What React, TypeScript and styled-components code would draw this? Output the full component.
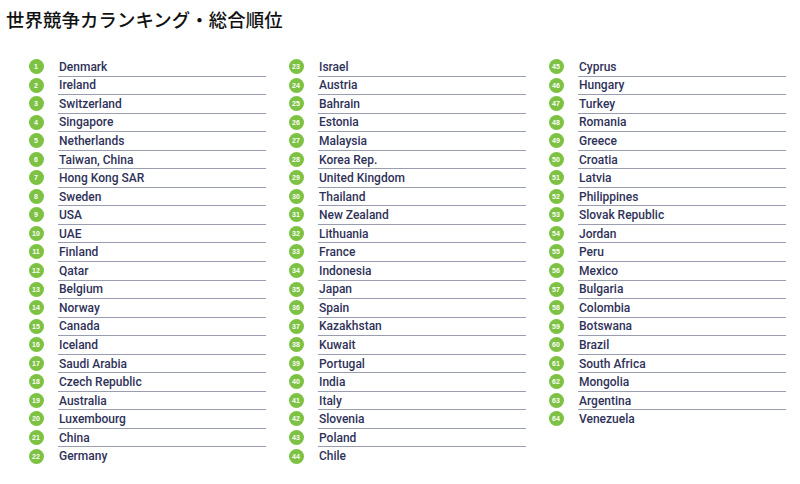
import React from 'react'
import styled, { createGlobalStyle } from 'styled-components'

const GlobalStyle = createGlobalStyle`
  html, body {
    margin: 0;
    padding: 0;
    background: #ffffff;
  }
`

const Page = styled.div`
  width: 800px;
  height: 484px;
  background: #ffffff;
  overflow: hidden;
  font-family: Roboto, 'Liberation Sans', sans-serif;
`

const Title = styled.h1`
  margin: 0;
  padding: 8px 0 0 6px;
  height: 48px;
  box-sizing: border-box;
  font-family: 'Noto Sans CJK JP', sans-serif;
  font-size: 18.4px;
  font-weight: 500;
  line-height: 22px;
  color: #111111;
  letter-spacing: 0.1px;
`

const Columns = styled.div`
  display: grid;
  grid-template-columns: repeat(3, 260px);
  padding: 10px 0 0 29px;
`

const Column = styled.ol`
  list-style: none;
  margin: 0;
  padding: 0;
  display: flex;
  flex-direction: column;
`

const Row = styled.li`
  display: flex;
  align-items: stretch;
  height: 18.55px;
`

const BadgeCell = styled.div`
  width: 29px;
  display: flex;
  align-items: center;
  padding-bottom: 1.5px;
  box-sizing: border-box;
`

const Badge = styled.span`
  width: 15px;
  height: 15px;
  margin-left: -0.5px;
  border-radius: 50%;
  background: #7dc243;
  color: #ffffff;
  font-family: 'Liberation Sans', Arial, sans-serif;
  font-size: 7px;
  font-weight: 700;
  display: flex;
  align-items: center;
  justify-content: center;
`

const Name = styled.div<{ $last: boolean }>`
  width: 208px;
  box-sizing: border-box;
  display: flex;
  align-items: center;
  padding-left: 1px;
  font-size: 12px;
  font-weight: 500;
  color: #2f3258;
  border-bottom: 1.5px solid ${p => (p.$last ? 'transparent' : '#9a9db0')};
`

const countries = [
  'Denmark', 'Ireland', 'Switzerland', 'Singapore', 'Netherlands', 'Taiwan, China',
  'Hong Kong SAR', 'Sweden', 'USA', 'UAE', 'Finland', 'Qatar', 'Belgium', 'Norway',
  'Canada', 'Iceland', 'Saudi Arabia', 'Czech Republic', 'Australia', 'Luxembourg',
  'China', 'Germany',
  'Israel', 'Austria', 'Bahrain', 'Estonia', 'Malaysia', 'Korea Rep.', 'United Kingdom',
  'Thailand', 'New Zealand', 'Lithuania', 'France', 'Indonesia', 'Japan', 'Spain',
  'Kazakhstan', 'Kuwait', 'Portugal', 'India', 'Italy', 'Slovenia', 'Poland', 'Chile',
  'Cyprus', 'Hungary', 'Turkey', 'Romania', 'Greece', 'Croatia', 'Latvia', 'Philippines',
  'Slovak Republic', 'Jordan', 'Peru', 'Mexico', 'Bulgaria', 'Colombia', 'Botswana',
  'Brazil', 'South Africa', 'Mongolia', 'Argentina', 'Venezuela',
]

const columns = [countries.slice(0, 22), countries.slice(22, 44), countries.slice(44)]

export default function App() {
  return (
    <Page>
      <GlobalStyle />
      <Title>世界競争カランキング・総合順位</Title>
      <Columns>
        {columns.map((list, ci) => (
          <Column key={ci}>
            {list.map((name, i) => (
              <Row key={name}>
                <BadgeCell>
                  <Badge>{ci * 22 + i + 1}</Badge>
                </BadgeCell>
                <Name $last={i === list.length - 1}>{name}</Name>
              </Row>
            ))}
          </Column>
        ))}
      </Columns>
    </Page>
  )
}
